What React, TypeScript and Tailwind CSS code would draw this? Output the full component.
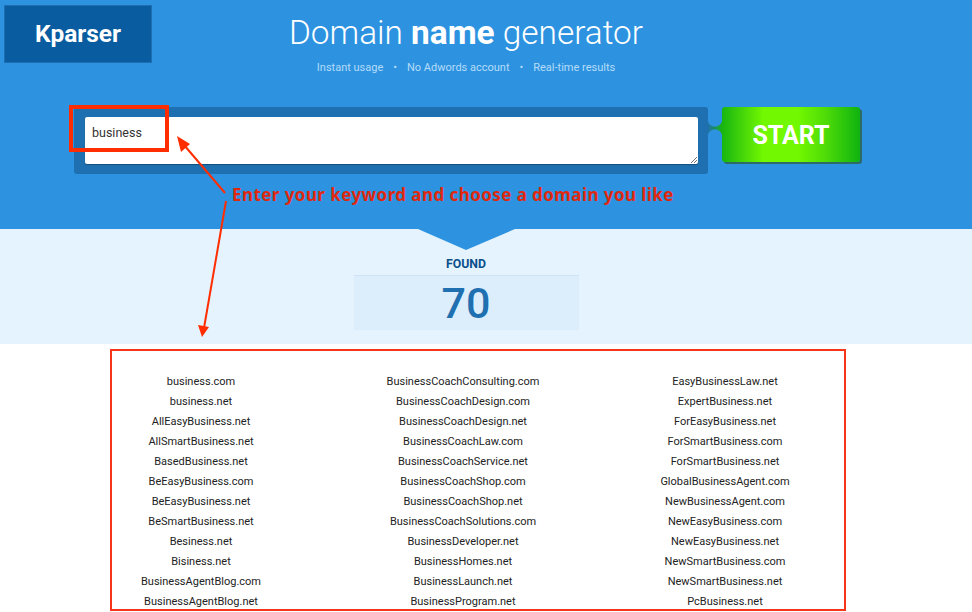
import React from "react";

const columns = [
  [
    "business.com",
    "business.net",
    "AllEasyBusiness.net",
    "AllSmartBusiness.net",
    "BasedBusiness.net",
    "BeEasyBusiness.com",
    "BeEasyBusiness.net",
    "BeSmartBusiness.net",
    "Besiness.net",
    "Bisiness.net",
    "BusinessAgentBlog.com",
    "BusinessAgentBlog.net",
  ],
  [
    "BusinessCoachConsulting.com",
    "BusinessCoachDesign.com",
    "BusinessCoachDesign.net",
    "BusinessCoachLaw.com",
    "BusinessCoachService.net",
    "BusinessCoachShop.com",
    "BusinessCoachShop.net",
    "BusinessCoachSolutions.com",
    "BusinessDeveloper.net",
    "BusinessHomes.net",
    "BusinessLaunch.net",
    "BusinessProgram.net",
  ],
  [
    "EasyBusinessLaw.net",
    "ExpertBusiness.net",
    "ForEasyBusiness.net",
    "ForSmartBusiness.com",
    "ForSmartBusiness.net",
    "GlobalBusinessAgent.com",
    "NewBusinessAgent.com",
    "NewEasyBusiness.com",
    "NewEasyBusiness.net",
    "NewSmartBusiness.com",
    "NewSmartBusiness.net",
    "PcBusiness.net",
  ],
];

const Annotations = () => (
  <svg className="absolute top-0 left-0 pointer-events-none" width="972" height="612" viewBox="0 0 972 612">
    <line x1="225" y1="193" x2="184" y2="145" stroke="#ff2d00" strokeWidth="2" />
    <polygon points="177,136 190,144 181,152" fill="#ff2d00" />
    <line x1="226" y1="201" x2="204" y2="328" stroke="#ff2d00" strokeWidth="2" />
    <polygon points="202,337 198,325 209,327" fill="#ff2d00" />
  </svg>
);

export default function App() {
  return (
    <div className="relative h-[612px] w-[972px] overflow-hidden bg-white font-['Roboto',sans-serif]">
      <header className="h-[229px] bg-[#2d93e0] pt-[5px] pl-1 pr-[44px]">
        <div className="grid grid-cols-[148px_1fr_148px]">
          <div className="flex h-[58px] items-center justify-center border border-[#1f6fb0] bg-[#0a5ca0] text-[24.5px] font-bold text-white">
            Kparser
          </div>
          <div className="flex flex-col items-center">
            <h1 className="mt-[6px] text-[33.4px] leading-[44px] font-light text-white">
              Domain <span className="font-bold">name</span> generator
            </h1>
            <div className="mt-[6px] flex items-center gap-[10px] text-[11px] leading-[14px] text-[#b5dbf8]">
              <span>Instant usage</span>
              <span>•</span>
              <span>No Adwords account</span>
              <span>•</span>
              <span>Real-time results</span>
            </div>
          </div>
        </div>
        <div className="mt-[32px] ml-[70px] flex items-start">
          <div className="h-[67px] w-[634px] rounded-[3px] bg-[#1f70b0] pt-[10px] pl-[11px]">
            <div className="relative h-[47px] w-[613px] rounded-[2px] bg-white pt-[8px] pl-[7px] text-[12.5px] leading-[15px] text-[#333] shadow-[0_1px_1px_#154f80]">
              business
              <svg className="absolute right-0 bottom-0" width="8" height="8" viewBox="0 0 8 8">
                <path d="M1 7L7 1M4 7L7 4" stroke="#777" strokeWidth="1" />
              </svg>
            </div>
          </div>
          <svg className="mt-[14px]" width="14" height="14" viewBox="0 0 14 14">
            <defs>
              <linearGradient id="neck">
                <stop offset="0" stopColor="#1f70b0" />
                <stop offset="1" stopColor="#17b50f" />
              </linearGradient>
            </defs>
            <path d="M0 0C1 4 4 5.5 7 5.5S13 4 14 0V14C13 10 10 8.5 7 8.5S1 10 0 14Z" fill="url(#neck)" />
          </svg>
          <button className="flex h-[55px] w-[138px] items-center justify-center rounded-[3px] bg-[linear-gradient(90deg,#17b50f_0%,#4fdc08_18%,#72f800_30%,#72f800_55%,#4fdc08_75%,#0fb30f_100%)] pt-[3px] text-[25px] font-bold text-white shadow-[2px_2px_0_#2f6b66]">
            START
          </button>
        </div>
        <p className="mt-[11px] ml-[228px] font-['Noto_Sans',sans-serif] text-[17px] leading-[20px] font-bold tracking-[0.43px] whitespace-nowrap text-[#e0280f]">
          Enter your keyword and choose a domain you like
        </p>
      </header>

      <section className="relative flex h-[115px] flex-col items-center bg-[#e5f3ff] pr-[40px]">
        <svg className="absolute top-0 left-[418px]" width="97" height="21" viewBox="0 0 97 21">
          <polygon points="0,0 97,0 48,21" fill="#2d93e0" />
        </svg>
        <div className="mt-[28px] text-[12.3px] leading-[14px] font-bold text-[#0a4f8a]">FOUND</div>
        <div className="mt-[4px] flex h-[55px] w-[225px] items-center justify-center border-t border-[#cfe3f5] bg-[#dcedfc] text-[43px] font-medium text-[#1f70b0]">
          70
        </div>
      </section>

      <main className="ml-[70px] grid w-[786px] grid-cols-3 pt-[28px] text-center text-[11px] leading-5 text-[#222]">
        {columns.map((col, i) => (
          <div key={i}>
            {col.map((name) => (
              <div key={name}>{name}</div>
            ))}
          </div>
        ))}
      </main>

      <div className="absolute top-[105px] left-[69px] h-[47px] w-[100px] border-4 border-[#ff2d00]" />
      <div className="absolute top-[349px] left-[110px] h-[262px] w-[736px] border-2 border-[#f5361a]" />
      <Annotations />
    </div>
  );
}
